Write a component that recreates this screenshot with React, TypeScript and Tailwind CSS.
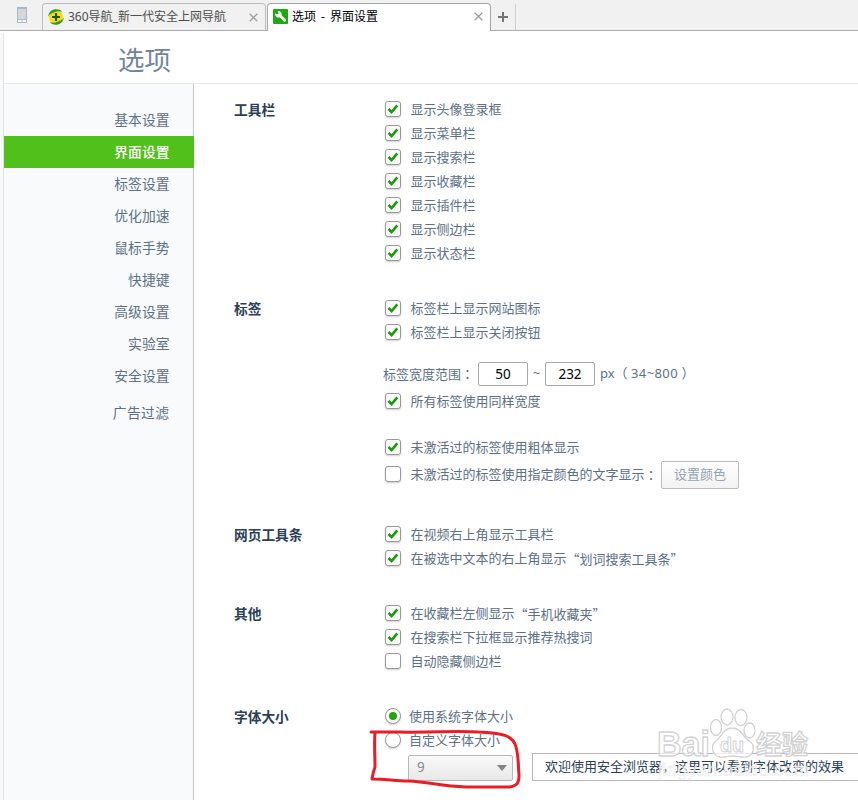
import { useState } from 'react'
import clsx from 'clsx'

const menu = [
  '基本设置',
  '界面设置',
  '标签设置',
  '优化加速',
  '鼠标手势',
  '快捷键',
  '高级设置',
  '实验室',
  '安全设置',
  '广告过滤'
]

function CloseIcon({ className }: { className?: string }) {
  return (
    <svg className={className} width="9" height="9" viewBox="0 0 9 9" fill="none" stroke="currentColor" strokeWidth="1.3">
      <path d="M.7.7l7.6 7.6M8.3.7L.7 8.3" />
    </svg>
  )
}

function Logo360() {
  return (
    <svg width="16" height="16" viewBox="0 0 16 16">
      <circle cx="8" cy="8" r="7.2" fill="#ffdc12" />
      <path d="M.3 7.500C.5 3 4 .3 8 .3c3 0 5 1 6 2.700C11 1.800 8.500 2.300 6.500 3.300 4 4.500 1.800 4.800.3 7.500z" fill="#2f9a1c" />
      <path d="M15.700 8.500C15.500 13 12 15.700 8 15.700c-3 0-5-1-6-2.700 3 1.200 5.500.7 7.500-.3C12 11.500 14.200 11.200 15.700 8.500z" fill="#2f9a1c" />
      <path d="M8 4v8M4 8h8" stroke="#145c10" strokeWidth="2.200" />
    </svg>
  )
}

function WrenchIcon() {
  return (
    <svg width="15" height="15" viewBox="0 0 15 15">
      <rect width="15" height="15" rx="1" fill="#20a812" />
      <path
        d="M2.200 4.300L4.300 5.600 5.700 4.400 4.700 2.200A3.300 3.300 0 0 1 8.600 6.400L12.600 10.300A1.400 1.400 0 0 1 10.600 12.300L6.700 8.200A3.300 3.300 0 0 1 2.200 4.300z"
        fill="#fff"
      />
    </svg>
  )
}

// colon centred in its full-width cell
function Colon() {
  return <span className="font-['Noto_Sans_CJK_TC',sans-serif]">：</span>
}

// full-width quotation marks round a name
function Quoted({ children }: { children: string }) {
  return <span className="mb-px font-['Noto_Sans_CJK_SC',sans-serif]">“{children}”</span>
}

function Check({ label, on = true, children }: { label: string; on?: boolean; children?: React.ReactNode }) {
  const [checked, setChecked] = useState(on)

  return (
    <div className="flex h-6 items-center">
      <button
        type="button"
        role="checkbox"
        aria-checked={checked}
        aria-label={label}
        onClick={() => setChecked(!checked)}
        className="mr-[9.500px] mb-0.5 flex size-4 shrink-0 items-center justify-center rounded-[3px] border border-[#999] bg-white shadow-[0_1px_2px_rgba(0,0,0,0.2)]"
      >
        {checked && (
          <svg width="12" height="12" viewBox="0 0 12 12" fill="none" stroke="#159e08" strokeWidth="2.600">
            <path d="M1.500 6L4.600 9 10.300 2.300" />
          </svg>
        )}
      </button>
      <span>{label}</span>
      {children}
    </div>
  )
}

function Radio({ label, on, onSelect }: { label: string; on: boolean; onSelect: () => void }) {
  return (
    <div className="flex h-6 items-center">
      <button
        type="button"
        role="radio"
        aria-checked={on}
        aria-label={label}
        onClick={onSelect}
        className="mr-2 mb-0.5 flex size-4 shrink-0 items-center justify-center rounded-full border border-[#999] bg-white shadow-[0_1px_2px_rgba(0,0,0,0.2)]"
      >
        {on && <span className="size-2 rounded-full bg-[#20a40c]" />}
      </button>
      <span>{label}</span>
    </div>
  )
}

function Section({ title, className, children }: { title: string; className?: string; children: React.ReactNode }) {
  return (
    <section className={clsx('flex', className)}>
      <h2 className="w-[151px] shrink-0 text-[13.7px] leading-6 font-bold text-[#2b3f56]">{title}</h2>
      <div className="min-w-0 flex-1">{children}</div>
    </section>
  )
}

function Watermark() {
  return (
    <svg className="pointer-events-none absolute top-[700px] left-[650px]" width="170" height="90" viewBox="0 0 170 90">
      <g fill="#fff" fillOpacity=".7" stroke="#d2d2d2" strokeWidth="1.300">
        <ellipse cx="66" cy="27.500" rx="5.500" ry="8" />
        <ellipse cx="77" cy="17" rx="6" ry="8" />
        <ellipse cx="91" cy="17.500" rx="6" ry="8" />
        <ellipse cx="99.500" cy="30.500" rx="5.500" ry="7.500" />
        <path d="M82 28C73 28 72 37 66 41 60 45 62 56 70 57 75 57.500 78 56 83 56 88 56 91 57.500 96 57 104 56 106 45 99 41 92 36 91 28 82 28z" />
      </g>
      <g fill="#fff" fillOpacity=".7" stroke="#d2d2d2" strokeWidth="1.300" fontFamily="Liberation Sans, sans-serif" fontWeight="700">
        <text x="7" y="56" fontSize="35" textLength="53" lengthAdjust="spacingAndGlyphs">Bai</text>
        <text x="70" y="52" fontSize="20" textLength="24" lengthAdjust="spacingAndGlyphs" strokeWidth="1">du</text>
        <text x="106" y="54" fontSize="26" fontFamily="Noto Sans CJK SC, sans-serif">经验</text>
      </g>
      <text
        x="8"
        y="76"
        fontSize="18"
        fontFamily="Liberation Sans, sans-serif"
        textLength="151"
        fill="#fff"
        fillOpacity=".75"
        stroke="#e0e0e0"
        strokeOpacity=".7"
        strokeWidth=".6"
      >
        jingyan.baidu.com
      </text>
    </svg>
  )
}

export default function App() {
  const [active, setActive] = useState('界面设置')
  const [custom, setCustom] = useState(false)
  const [min, setMin] = useState('50')
  const [max, setMax] = useState('232')

  return (
    <div className="relative flex h-[800px] w-[858px] flex-col overflow-hidden bg-white font-['Noto_Sans','Noto_Sans_CJK_SC',sans-serif] text-[13px] text-[#5c7088]">
      <div className="flex h-[31px] shrink-0 items-end bg-[#f1f1f1] text-xs shadow-[inset_0_-1px_0_#ababab]">
        <div className="flex h-[31px] w-[42px] pt-[7px] pl-[17px]">
          <svg width="10" height="16" viewBox="0 0 10 16">
            <rect x=".5" y=".5" width="9" height="15" fill="#fff" stroke="#a3b9da" />
            <path d="M1 2h8v10H1z" fill="#d7d7d7" />
            <path d="M1 1.500h8M1 12.500h8" stroke="#a3b9da" />
            <path d="M4 14h2" stroke="#a3b9da" />
          </svg>
        </div>
        <div className="mr-px flex h-7 w-[224px] items-center rounded-t-[4px] border border-[#bdbdbd] border-b-[#ababab] bg-[#f1f1f1] pr-[7px] pl-[5px] text-[#4d4d4d]">
          <Logo360 />
          <span className="ml-1 flex-1 whitespace-nowrap">360导航_新一代安全上网导航</span>
          <CloseIcon className="text-[#a0a0a0]" />
        </div>
        <div className="flex h-7 w-[224px] items-center rounded-t-[4px] border border-b-0 border-[#a6a6a6] bg-white pr-[7px] pb-0.5 pl-[5px] text-black">
          <WrenchIcon />
          <span className="ml-1 flex-1 whitespace-nowrap [word-spacing:2px]">选项 - 界面设置</span>
          <CloseIcon className="text-[#a0a0a0]" />
        </div>
        <div className="mb-px flex h-[26px] w-[25px] items-center justify-center border-r border-[#d0d0d0] text-[#757575]">
          <svg width="10" height="10" viewBox="0 0 10 10" stroke="currentColor" strokeWidth="2">
            <path d="M5 0v10M0 5h10" />
          </svg>
        </div>
      </div>

      <div className="flex min-h-0 flex-1">
        <div className="mt-0.5 w-1 shrink-0 border-r border-[#e2e4e4] bg-[#f8faf9]" />
        <div className="flex min-w-0 flex-1 flex-col">
          <header className="flex h-[53px] shrink-0 items-center border-b border-[#e8e8e8] pt-1.5 pl-[114px]">
            <h1 className="text-[26.500px] leading-none text-[#72869b]">选项</h1>
          </header>

          <div className="flex min-h-0 flex-1">
            <nav className="w-[190px] shrink-0 border-r border-[#c3c5cc] bg-[#f9fafc] pt-5">
              {menu.map((item) => (
                <button
                  key={item}
                  type="button"
                  onClick={() => setActive(item)}
                  className={clsx(
                    'block h-8 w-[190px] pr-[24.500px] text-right text-[13.800px]',
                    item === active && 'bg-[#52c01a] font-medium text-white',
                    item === '广告过滤' && 'mt-[5px] tracking-[0.400px]'
                  )}
                >
                  {item}
                </button>
              ))}
            </nav>

            <main className="min-w-0 flex-1 pt-3.5 pl-10 whitespace-nowrap">
              <Section title="工具栏">
                <Check label="显示头像登录框" />
                <Check label="显示菜单栏" />
                <Check label="显示搜索栏" />
                <Check label="显示收藏栏" />
                <Check label="显示插件栏" />
                <Check label="显示侧边栏" />
                <Check label="显示状态栏" />
              </Section>

              <Section title="标签" className="mt-[31px]">
                <Check label="标签栏上显示网站图标" />
                <Check label="标签栏上显示关闭按钮" />
                <div className="mt-[17px] -ml-0.5 flex h-6 items-center">
                  <span className="w-[95px]">标签宽度范围<Colon /></span>
                  <input
                    value={min}
                    onChange={(event) => setMin(event.target.value)}
                    className="h-6 w-[50px] rounded-[2px] border border-[#aaa] bg-white text-center text-[13.500px] text-black"
                  />
                  <span className="w-[17px] text-center">~</span>
                  <input
                    value={max}
                    onChange={(event) => setMax(event.target.value)}
                    className="h-6 w-[50px] rounded-[2px] border border-[#aaa] bg-white text-center text-[13.500px] text-black"
                  />
                  <span className="ml-[5px]">px（ <span className="tracking-[0.400px]">34~800</span> ）</span>
                </div>
                <div className="mt-1">
                  <Check label="所有标签使用同样宽度" />
                </div>
                <div className="mt-[22px]">
                  <Check label="未激活过的标签使用粗体显示" />
                </div>
                <div className="mt-[3px]">
                  <Check label="未激活过的标签使用指定颜色的文字显示" on={false}>
                    <Colon />
                    <button
                      type="button"
                      className="ml-[3.500px] h-7 w-[78px] rounded-[2px] border border-[#bcbcbc] bg-linear-to-b from-white to-[#f3f3f3] text-[#94a3b5]"
                    >
                      设置颜色
                    </button>
                  </Check>
                </div>
              </Section>

              <Section title="网页工具条" className="mt-9">
                <Check label="在视频右上角显示工具栏" />
                <Check label="在被选中文本的右上角显示">
                  <Quoted>划词搜索工具条</Quoted>
                </Check>
              </Section>

              <Section title="其他" className="mt-[31px]">
                <Check label="在收藏栏左侧显示">
                  <Quoted>手机收藏夹</Quoted>
                </Check>
                <Check label="在搜索栏下拉框显示推荐热搜词" />
                <Check label="自动隐藏侧边栏" on={false} />
              </Section>

              <Section title="字体大小" className="mt-[31px]">
                <Radio label="使用系统字体大小" on={!custom} onSelect={() => setCustom(false)} />
                <Radio label="自定义字体大小" on={custom} onSelect={() => setCustom(true)} />
                <div className="flex items-center pl-[23px]">
                  <button
                    type="button"
                    className="mt-px flex h-[26px] w-[105px] shrink-0 items-center justify-between rounded-[2px] border border-[#b5b5bb] bg-linear-to-b from-[#fafafa] to-[#e8e8e8] pr-[5px] pl-2 text-[13.500px] text-[#8a8a8a]"
                  >
                    9
                    <svg width="10" height="6" viewBox="0 0 10 6">
                      <path d="M0 0h10L5 6z" fill="#848484" />
                    </svg>
                  </button>
                  <div className="ml-[19px] flex h-7 w-[340px] shrink-0 items-center border border-[#b9b9bd] pl-3 text-[#2b3f56]">
                    欢迎使用安全浏览器，这里可以看到字体改变的效果
                  </div>
                </div>
              </Section>
            </main>
          </div>
        </div>
      </div>

      <Watermark />

      {/* hand-drawn marker round the font size picker */}
      <svg className="pointer-events-none absolute top-[720px] left-[360px]" width="170" height="80" viewBox="0 0 170 80">
        <path
          d="M11 12H40C75 13 95 10 118 12 142 13 153 15 156 27 159 38 158 46 159 55 159 63 157 66 149 67H106C80 66 70 62 48 61 35 61 26 59 12 59 13 52 14 51 15 47 15 34 14 25 15 12"
          fill="none"
          stroke="#ed1c24"
          strokeWidth="3"
          strokeLinecap="round"
          strokeLinejoin="round"
        />
      </svg>
    </div>
  )
}
